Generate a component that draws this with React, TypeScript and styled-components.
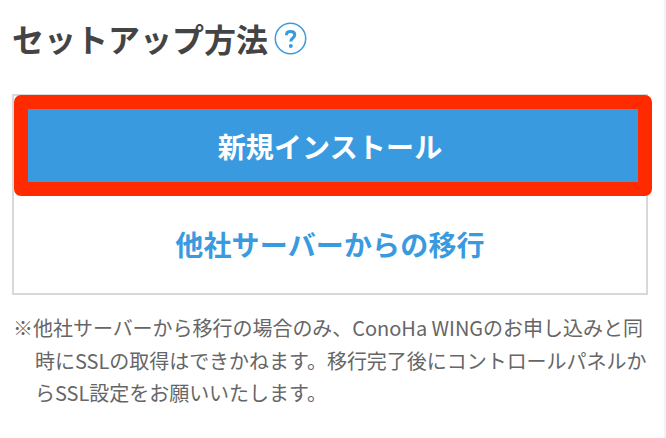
import React from "react";
import styled, { createGlobalStyle } from "styled-components";

const Global = createGlobalStyle`
  html, body { margin: 0; padding: 0; background: #fff; }
  body { font-family: "Noto Sans CJK JP", "Noto Sans", sans-serif; }
`;

const Page = styled.div`
  width: 666px;
  height: 438px;
  box-sizing: border-box;
  padding: 18px 16px 0 12px;
  border-right: 2px solid #f4f4f4;
  overflow: hidden;
`;

const TitleRow = styled.div`
  display: flex;
  align-items: center;
  height: 40px;
  gap: 6px;
`;

const Title = styled.h2`
  margin: 0;
  font-size: 32px;
  line-height: 40px;
  font-weight: 700;
  color: #444;
`;

const Help = styled.svg`
  width: 33px;
  height: 33px;
  flex: none;
`;

const Choices = styled.div`
  position: relative;
  margin-top: 36px;
  height: 201px;
  box-sizing: border-box;
  border: 2px solid #d9d9d9;
  padding: 13px 8px 0 14px;
`;

const Choice = styled.div<{ $active?: boolean }>`
  height: 73px;
  box-sizing: border-box;
  padding-right: 6px;
  display: flex;
  align-items: center;
  justify-content: center;
  font-size: 28px;
  font-weight: 700;
  letter-spacing: 0.15px;
  color: ${(p) => (p.$active ? "#fff" : "#3a9ae0")};
  background: ${(p) => (p.$active ? "#3a9ae0" : "transparent")};
`;

const SecondChoice = styled(Choice)`
  margin-top: 25px;
`;

const Highlight = styled.div`
  position: absolute;
  left: 0;
  top: -1px;
  width: 638px;
  height: 101px;
  box-sizing: border-box;
  border: 14px solid #ff2a00;
  border-radius: 7px;
  pointer-events: none;
`;

const Note = styled.p`
  margin: 17px 0 0;
  padding-left: 23px;
  text-indent: -22px;
  font-size: 20px;
  line-height: 32.5px;
  letter-spacing: -0.03px;
  color: #666;
`;

export default function App() {
  return (
    <Page>
      <Global />
      <TitleRow>
        <Title>セットアップ方法</Title>
        <Help viewBox="0 0 33 33" aria-hidden="true">
          <circle cx="16.5" cy="16.5" r="15.2" fill="none" stroke="#3a9ae0" strokeWidth="1.5" />
          <path
            d="M12.4 13.2c0-2.4 1.8-3.8 4.2-3.8 2.5 0 4.2 1.4 4.2 3.4 0 3.2-4 3.2-4 6.6"
            fill="none"
            stroke="#3a9ae0"
            strokeWidth="3"
          />
          <circle cx="16.8" cy="24" r="2" fill="#3a9ae0" />
        </Help>
      </TitleRow>
      <Choices>
        <Choice $active>新規インストール</Choice>
        <SecondChoice>他社サーバーからの移行</SecondChoice>
        <Highlight />
      </Choices>
      <Note>※他社サーバーから移行の場合のみ、ConoHa WINGのお申し込みと同時にSSLの取得はできかねます。移行完了後にコントロールパネルからSSL設定をお願いいたします。</Note>
    </Page>
  );
}
